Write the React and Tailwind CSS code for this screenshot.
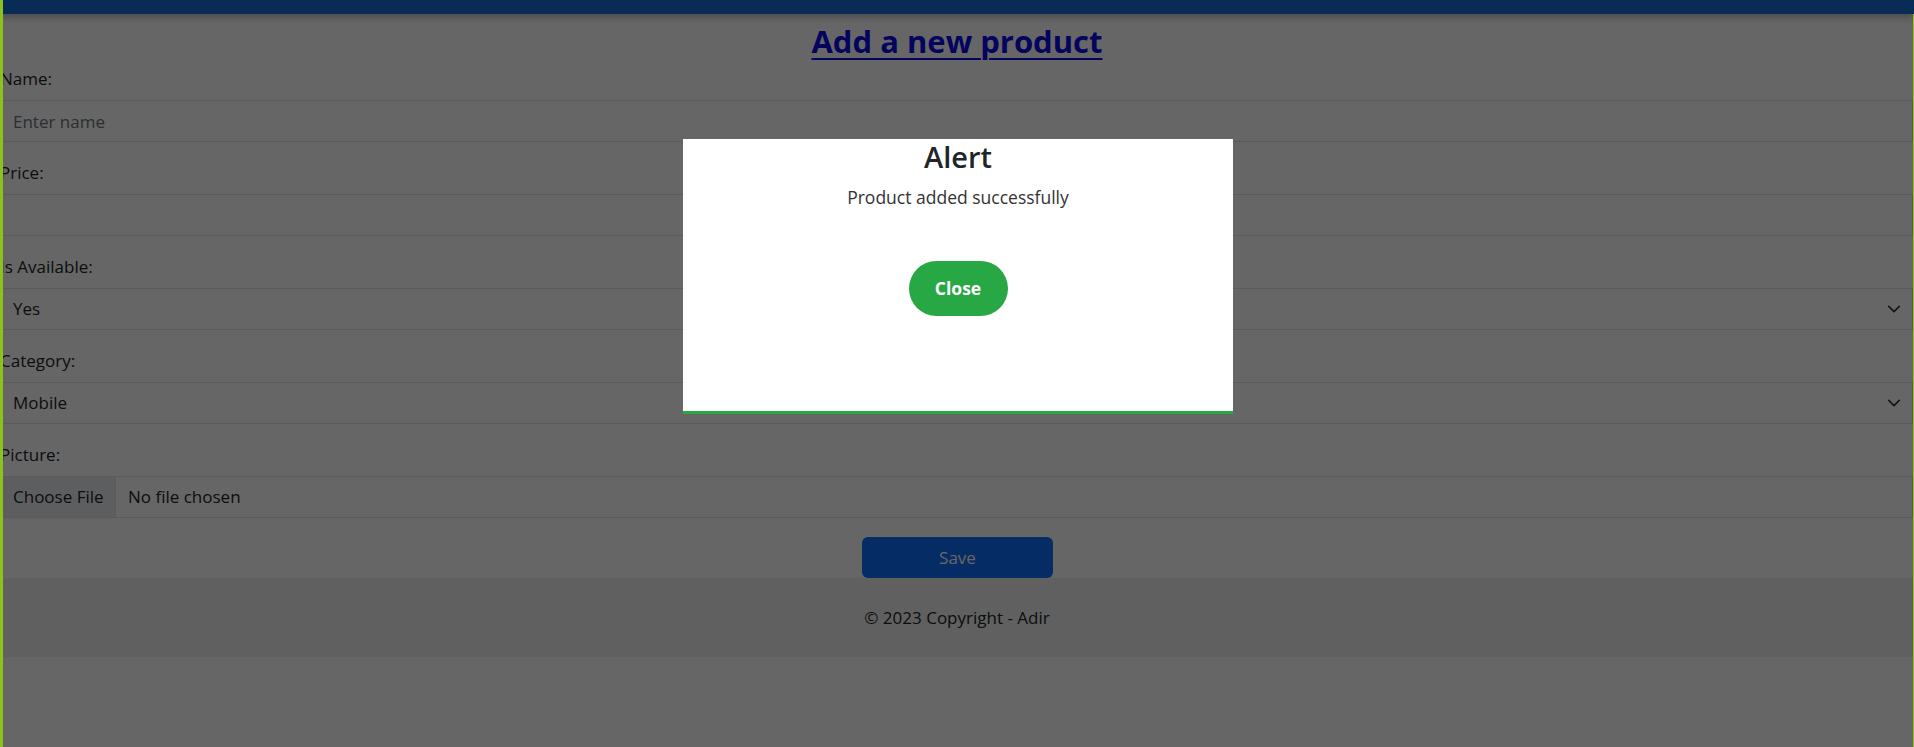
import { useState } from "react";

const font = { fontFamily: '"Open Sans", "Noto Sans", Arial, sans-serif' };

function Chevron() {
  return (
    <svg width="18" height="14" viewBox="0 0 16 16" fill="none" className="absolute right-[9px] top-1/2 -translate-y-1/2">
      <path d="m2 5 6 6 6-6" stroke="#343a40" strokeWidth="2" strokeLinecap="round" strokeLinejoin="round" />
    </svg>
  );
}

function Field({ label, children, first }) {
  return (
    <div className={first ? "" : "mt-[19px]"}>
      <label className="block h-6 text-[17px] leading-6 text-[#212529]">{label}</label>
      <div className="mt-[9px]">{children}</div>
    </div>
  );
}

export default function App() {
  const [open, setOpen] = useState(true);

  return (
    <div className="relative h-[747px] w-full overflow-hidden bg-white" style={font}>
      {/* navbar */}
      <div className="relative z-10 h-[14px] w-full bg-[#146ed4] shadow-[0_2px_8px_rgba(0,0,0,0.35)]"></div>

      <h1 className="mb-[7px] mt-[8px] text-center text-[31px] font-bold leading-[38px] text-[#0b0bec] underline decoration-2 underline-offset-[5px]">
        Add a new product
      </h1>

      <form className="w-full pr-px">
        <Field label="Name:" first>
          <input
            className="h-[42px] w-full border border-[#dee2e6] px-3 text-[17px] text-[#212529] outline-none placeholder:text-[#6c757d]"
            placeholder="Enter name"
          />
        </Field>
        <Field label="Price:">
          <input className="h-[42px] w-full border border-[#dee2e6] px-3 text-[17px] outline-none" />
        </Field>
        <Field label="Is Available:">
          <div className="relative flex h-[42px] w-full items-center border border-[#dee2e6] px-3 text-[17px] text-[#212529]">
            Yes
            <Chevron />
          </div>
        </Field>
        <Field label="Category:">
          <div className="relative flex h-[42px] w-full items-center border border-[#dee2e6] px-3 text-[17px] text-[#212529]">
            Mobile
            <Chevron />
          </div>
        </Field>
        <Field label="Picture:">
          <div className="flex h-[42px] w-full items-center border border-[#dee2e6] text-[17px] text-[#212529]">
            <span className="flex h-full w-[115px] items-center border-r border-[#dee2e6] bg-[#e9ecef] pl-3">Choose File</span>
            <span className="px-3">No file chosen</span>
          </div>
        </Field>

        <div className="mt-[19px] flex justify-center">
          <button type="button" className="ml-[2px] h-[41px] w-[191px] rounded-md bg-[#0d6efd] text-[17px] text-white">
            Save
          </button>
        </div>
      </form>

      {/* footer */}
      <footer className="flex h-[79px] w-full items-center justify-center bg-[#f0f0f0] text-[17px] text-[#212529]">
        © 2023 Copyright - Adir
      </footer>

      {/* modal backdrop */}
      {open && (
        <div className="absolute inset-0 z-20 flex justify-center bg-black/60 pl-[3px] pr-px pt-[139px]">
          <div className="flex h-[275px] w-[550px] flex-col items-center border-b-[3px] border-[#28a745] bg-white">
            <h3 className="text-[29px] font-semibold leading-[35px] text-[#212529]">Alert</h3>
            <p className="mt-[11px] text-[17.5px] leading-6 text-[#333]">Product added successfully</p>
            <button
              type="button"
              onClick={() => setOpen(false)}
              className="mt-[52px] h-[55px] w-[99px] rounded-full bg-[#28a745] text-[17.5px] font-bold text-white"
            >
              Close
            </button>
          </div>
        </div>
      )}

      {/* window frame strips */}
      <div className="absolute bottom-0 left-0 top-0 z-30 w-[3px] bg-[#8cc21e]"></div>
      <div className="absolute bottom-0 right-0 top-[14px] z-30 w-px bg-[#8cc21e]"></div>
    </div>
  );
}
